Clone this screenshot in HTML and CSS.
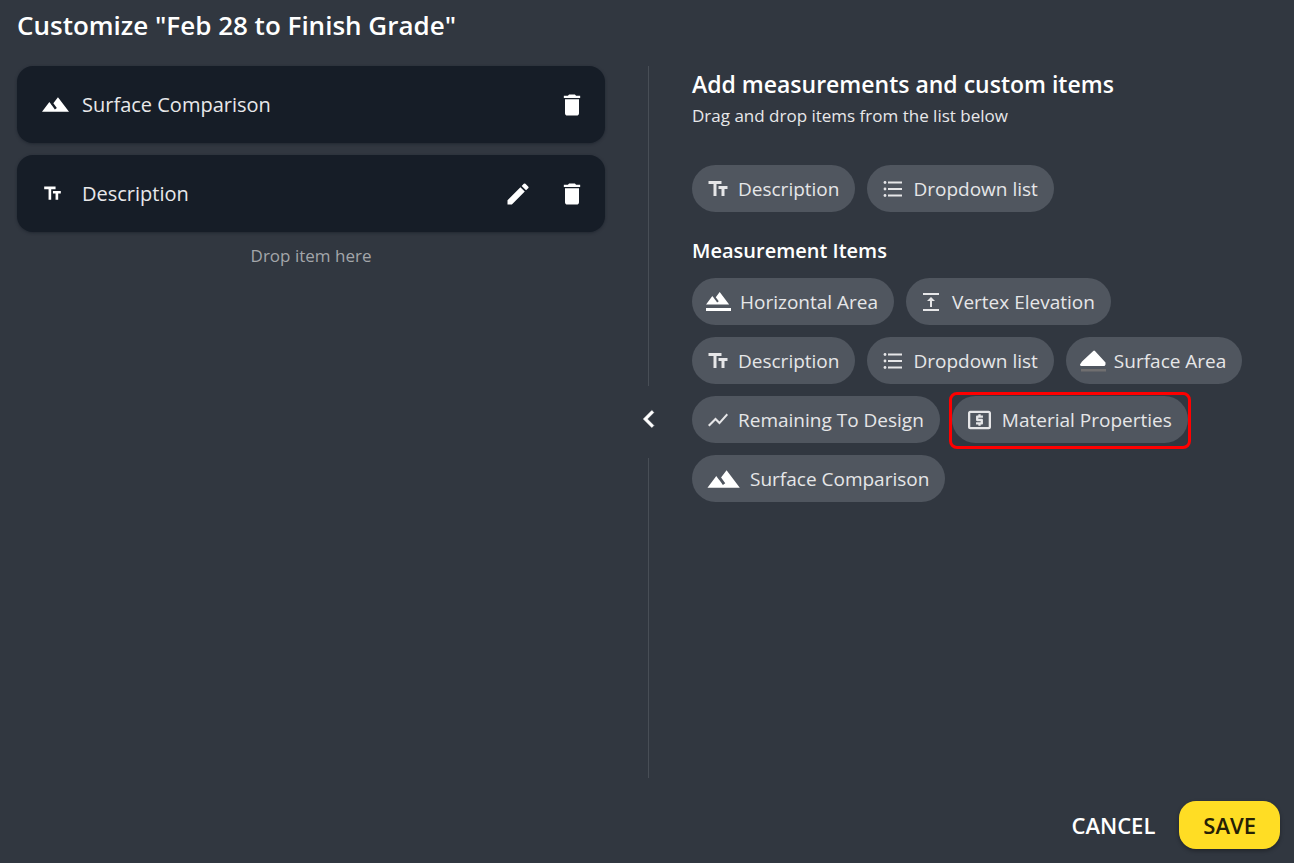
FILE: index.html
```html
<!DOCTYPE html>
<html lang="en">
<head>
<meta charset="utf-8">
<meta name="viewport" content="width=device-width, initial-scale=1">
<title>Customize "Feb 28 to Finish Grade"</title>
<link rel="stylesheet" href="styles.css">
</head>
<body>
<svg class="sprite" aria-hidden="true">
  <symbol id="mountains" viewBox="1 6 22 12"><path d="M14 6l-3.75 5 2.85 3.8-1.6 1.2C9.81 13.75 7 10 7 10l-6 8h22L14 6z"/></symbol>
  <symbol id="text" viewBox="0 0 24 24"><path d="M2.5 4v3h5v12h3V7h5V4h-13zm19 5h-9v3h3v7h3v-7h3V9z"/></symbol>
  <symbol id="trash" viewBox="0 0 24 24"><path d="M6 19c0 1.1.9 2 2 2h8c1.1 0 2-.9 2-2V7H6v12zM19 4h-3.5l-1-1h-5l-1 1H5v2h14V4z"/></symbol>
  <symbol id="pencil" viewBox="0 0 24 24"><path d="M3 17.25V21h3.75L17.81 9.94l-3.75-3.75L3 17.25zM20.71 7.04a1 1 0 0 0 0-1.41l-2.34-2.34a1 1 0 0 0-1.41 0l-1.83 1.83 3.75 3.75 1.83-1.83z"/></symbol>
</svg>

<header class="header"><h1 class="title">Customize "Feb 28 to Finish Grade"</h1></header>

<main class="columns">
  <section class="selected">
    <ul class="cards">
      <li class="card">
        <span class="card-icon"><svg class="icon-mountains" aria-hidden="true"><use href="#mountains"/></svg></span>
        <span class="card-label">Surface Comparison</span>
        <button class="icon-button" type="button" aria-label="Delete Surface Comparison"><svg class="icon-action"><use href="#trash"/></svg></button>
      </li>
      <li class="card">
        <span class="card-icon"><svg class="icon-text" aria-hidden="true"><use href="#text"/></svg></span>
        <span class="card-label">Description</span>
        <button class="icon-button" type="button" aria-label="Edit Description"><svg class="icon-action"><use href="#pencil"/></svg></button>
        <button class="icon-button" type="button" aria-label="Delete Description"><svg class="icon-action"><use href="#trash"/></svg></button>
      </li>
    </ul>
    <p class="drop-hint">Drop item here</p>
  </section>

  <div class="divider">
    <span class="line"></span>
    <button class="collapse" type="button" aria-label="Collapse panel"><svg class="icon-chevron" viewBox="0 0 24 24"><path d="M15.41 7.41L14 6l-6 6 6 6 1.41-1.41L10.83 12z"/></svg></button>
    <span class="line"></span>
  </div>

  <section class="palette">
    <h2 class="palette-title">Add measurements and custom items</h2>
    <p class="palette-hint">Drag and drop items from the list below</p>
    <div class="chips">
      <button class="chip" type="button"><svg class="chip-icon"><use href="#text"/></svg>Description</button>
      <button class="chip" type="button"><svg class="chip-icon" viewBox="-2 0 28 24"><circle cx="4" cy="5.500" r="1.400"/><circle cx="4" cy="12" r="1.400"/><circle cx="4" cy="18.500" r="1.400"/><path d="M7 4.500h14v2H7zM7 11h14v2H7zM7 17.500h14v2H7z"/></svg>Dropdown list</button>
    </div>
    <h3 class="group-title">Measurement Items</h3>
    <div class="chips">
      <button class="chip" type="button"><svg class="chip-icon medium white" viewBox="0 0 30 24"><path transform="translate(1 -4.4) scale(1.05)" d="M14 6l-3.75 5 2.85 3.8-1.6 1.2C9.81 13.75 7 10 7 10l-6 8h22L14 6z"/><path d="M2 18h25v3H2z"/></svg>Horizontal Area</button>
      <button class="chip" type="button"><svg class="chip-icon" viewBox="0 0 28 24"><path d="M5 3h16v2H5zM5 19h16v2H5zM13 7l4 4h-3v6h-2v-6H9z"/></svg>Vertex Elevation</button>
      <button class="chip" type="button"><svg class="chip-icon"><use href="#text"/></svg>Description</button>
      <button class="chip" type="button"><svg class="chip-icon" viewBox="-2 0 28 24"><circle cx="4" cy="5.500" r="1.400"/><circle cx="4" cy="12" r="1.400"/><circle cx="4" cy="18.500" r="1.400"/><path d="M7 4.500h14v2H7zM7 11h14v2H7zM7 17.500h14v2H7z"/></svg>Dropdown list</button>
      <button class="chip" type="button"><svg class="chip-icon medium white" viewBox="0 0 30 24"><path d="M16 1.5Q16.600 1.500 17.200 2.200L27.500 13.500V15.500Q27 17 26 17H3.500Q2 17 2 15.500L4 12.500 15 2.200Z"/><path class="base" d="M3 20h25v2.500H3z"/></svg>Surface Area</button>
      <button class="chip" type="button"><svg class="chip-icon" viewBox="-2 0 28 24"><path d="M3.500 18.490l6-6.010 4 4L22 6.920l-1.410-1.410-7.090 7.970-4-4L2 16.990z"/></svg>Remaining To Design</button>
      <button class="chip highlighted" type="button"><svg class="chip-icon wide" viewBox="0 0 32 24"><path transform="translate(1.700 -1.800) scale(1.150)" d="M11 17h2v-1h1c.55 0 1-.45 1-1v-3c0-.55-.45-1-1-1h-3v-1h4V8h-2V7h-2v1h-1c-.55 0-1 .45-1 1v3c0 .55.45 1 1 1h3v1H9v2h2v1zm9-13H4c-1.110 0-1.990.89-1.990 2L2 18c0 1.110.89 2 2 2h16c1.110 0 2-.89 2-2V6c0-1.110-.89-2-2-2zm0 14H4V6h16v12z"/></svg>Material Properties</button>
      <button class="chip" type="button"><svg class="chip-icon widest white" viewBox="0 0 40 24"><path transform="translate(2 -5.600) scale(1.470)" d="M14 6l-3.750 5 2.850 3.800-1.600 1.200C9.810 13.750 7 10 7 10l-6 8h22L14 6z"/></svg>Surface Comparison</button>
    </div>
  </section>
</main>

<footer class="actions">
  <button class="button" type="button">CANCEL</button>
  <button class="button primary" type="button">SAVE</button>
</footer>
</body>
</html>
```
FILE: styles.css
```css
* {
  box-sizing: border-box;
}

body {
  display: flex;
  flex-direction: column;
  min-height: 100vh;
  margin: 0;
  padding: 8px 14px 14px 17px;
  background: #313740;
  color: #fff;
  font-family: "Open Sans", "Noto Sans", sans-serif;
}

h1,
h2,
h3,
p,
ul {
  margin: 0;
  padding: 0;
}

button {
  border: 0;
  background: none;
  color: inherit;
  font-family: inherit;
  cursor: pointer;
}

svg {
  display: block;
  fill: currentColor;
}

.sprite {
  position: absolute;
  width: 0;
  height: 0;
}

.title {
  font-size: 26px;
  font-weight: 600;
  line-height: 34px;
}

.columns {
  display: grid;
  flex: 1;
  grid-template-columns: 1fr 1px 1fr;
  gap: 43px;
  margin-top: 24px;
}

.cards {
  display: grid;
  gap: 12px;
  list-style: none;
}

.card {
  display: flex;
  align-items: center;
  gap: 26px;
  height: 77px;
  padding: 0 19px 0 25px;
  border-radius: 16px;
  background: #161d27;
  box-shadow: 0 1px 3px #161d2799;
}

.card-icon {
  width: 28px;
  margin-right: -14px;
}

.icon-mountains {
  width: 27px;
  height: 15px;
}

.icon-text {
  width: 21px;
  height: 21px;
}

.card-label {
  flex: 1;
  color: #e8e8ea;
  font-size: 20px;
  line-height: 28px;
}

.icon-button {
  padding: 0;
}

.icon-action {
  width: 28px;
  height: 28px;
}

.drop-hint {
  margin-top: 12px;
  color: #a3a6aa;
  font-size: 17px;
  line-height: 24px;
  text-align: center;
}

.divider {
  display: flex;
  flex-direction: column;
  align-items: center;
}

.line {
  flex: 1;
  width: 1px;
  background: #484e56;
}

.collapse {
  height: 72px;
  padding: 0 0 6px;
}

.icon-chevron {
  width: 34px;
  height: 34px;
  stroke: currentColor;
  stroke-width: 0.4;
}

.palette-title {
  padding-top: 2px;
  font-size: 23px;
  font-weight: 600;
  line-height: 32px;
}

.palette-hint {
  margin-top: 4px;
  color: #e8e8ea;
  font-size: 17px;
  line-height: 24px;
}

.group-title {
  margin: 25px 0 13px;
  font-size: 20px;
  font-weight: 600;
  line-height: 28px;
}

.chips {
  display: flex;
  flex-wrap: wrap;
  gap: 12px;
  padding-right: 24px;
}

.palette-hint + .chips {
  margin-top: 37px;
}

.chip {
  position: relative;
  display: flex;
  align-items: center;
  gap: 6px;
  height: 47px;
  padding: 0 16px 0 12px;
  border-radius: 24px;
  background: #50565f;
  color: #e6e6e8;
  font-size: 19px;
  line-height: 24px;
}

.chip-icon {
  width: 28px;
  height: 24px;
}

.medium {
  width: 30px;
}

.wide {
  width: 32px;
}

.widest {
  width: 40px;
}

.white {
  color: #fff;
}

.base {
  fill: #706f70;
}

.highlighted::after {
  position: absolute;
  inset: -4px -3px -6px;
  border: 3px solid #f00;
  border-radius: 8px;
  content: "";
}

.actions {
  display: flex;
  justify-content: flex-end;
  margin-top: 23px;
}

.button {
  height: 48px;
  padding: 0 24px;
  border-radius: 17px;
  font-size: 22px;
  font-weight: 600;
  line-height: 28px;
}

.primary {
  background: #ffdd24;
  box-shadow: 0 2px 4px #0005;
  color: #262005;
}
```
